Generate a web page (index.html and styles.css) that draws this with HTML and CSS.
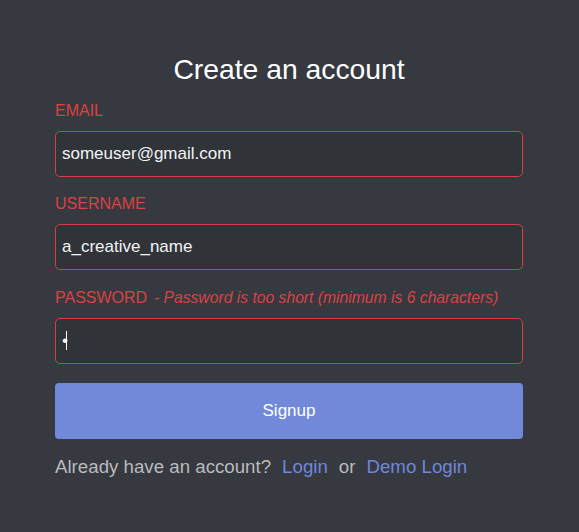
FILE: index.html
```html
<!DOCTYPE html>
<html lang="en">
<head>
<meta charset="utf-8">
<title>Create an account</title>
<link rel="stylesheet" href="styles.css">
</head>
<body>
<main class="card">
  <h1 class="title">Create an account</h1>
  <form class="form">
    <div class="field field-email">
      <label class="label" for="email">EMAIL</label>
      <input class="input" id="email" type="text" value="someuser@gmail.com">
    </div>
    <div class="field field-username">
      <label class="label" for="username">USERNAME</label>
      <input class="input" id="username" type="text" value="a_creative_name">
    </div>
    <div class="field field-password">
      <label class="label" for="password">PASSWORD<span class="sep">-</span><em class="err">Password is too short (minimum is 6 characters)</em></label>
      <div class="input-wrap">
        <input class="input" id="password" type="password" value="a">
        <span class="caret"></span>
      </div>
    </div>
    <button class="btn" type="button">Signup</button>
    <p class="footer"><span>Already have an account?</span><a class="link" href="#">Login</a><span>or</span><a class="link" href="#">Demo Login</a></p>
  </form>
</main>
</body>
</html>
```
FILE: styles.css
```css
html, body {
  margin: 0;
  padding: 0;
  background: #36393f;
}
body {
  font-family: "Liberation Sans", Arial, sans-serif;
}
.card {
  box-sizing: border-box;
  width: 579px;
  height: 532px;
  background: #36393f;
  border-radius: 3px;
  padding: 53px 56px 0 55px;
}
.title {
  margin: 0;
  font-size: 28.3px;
  line-height: 32px;
  font-weight: normal;
  color: #ffffff;
  text-align: center;
}
.form {
  margin-top: 16px;
  display: flex;
  flex-direction: column;
}
.field {
  display: flex;
  flex-direction: column;
}
.field-email {
  margin-bottom: 17px;
}
.field-username {
  margin-bottom: 18px;
}
.label {
  display: block;
  font-size: 16px;
  line-height: 20px;
  color: #dc4143;
  margin-bottom: 10px;
  white-space: nowrap;
}
.sep {
  margin-left: 7px;
  margin-right: 4px;
}
.err {
  font-style: italic;
  font-size: 15.7px;
}
.input-wrap {
  position: relative;
}
.input {
  box-sizing: border-box;
  width: 100%;
  height: 46px;
  margin: 0;
  padding: 0 6px;
  border: 1px solid #d63e40;
  border-radius: 5px;
  background: #303338;
  color: #f2f3f5;
  font-family: "Liberation Sans", Arial, sans-serif;
  font-size: 17px;
  outline: none;
}
.caret {
  position: absolute;
  left: 11px;
  top: 13px;
  width: 1px;
  height: 19px;
  background: #ffffff;
}
.btn {
  margin-top: 19px;
  height: 56px;
  width: 100%;
  border: none;
  border-radius: 4px;
  background: #7289da;
  color: #ffffff;
  font-family: "Liberation Sans", Arial, sans-serif;
  font-size: 17px;
  cursor: pointer;
}
.footer {
  margin: 16px 0 0;
  display: flex;
  gap: 11px;
  font-size: 18.7px;
  line-height: 24px;
  color: #b9bbbe;
}
.link {
  color: #6f87db;
  text-decoration: none;
}
```
